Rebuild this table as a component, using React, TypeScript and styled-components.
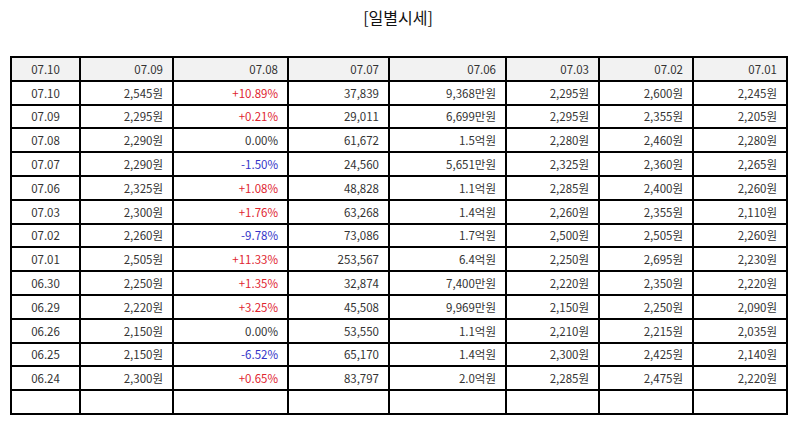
import styled, { createGlobalStyle } from 'styled-components'

const GlobalStyle = createGlobalStyle`
  html, body {
    margin: 0;
    padding: 0;
    background: #fff;
  }
  body {
    font-family: "Noto Sans CJK KR", "Noto Sans", sans-serif;
  }
`

type Row = {
  date: string
  close: string
  rate: string
  volume: string
  amount: string
  c1: string
  c2: string
  c3: string
}

const heads = ['07.10', '07.09', '07.08', '07.07', '07.06', '07.03', '07.02', '07.01']
const widths = [69, 93, 115, 101, 117, 93, 94, 94]

const rows: Row[] = [
  { date: '07.10', close: '2,545원', rate: '+10.89%', volume: '37,839', amount: '9,368만원', c1: '2,295원', c2: '2,600원', c3: '2,245원' },
  { date: '07.09', close: '2,295원', rate: '+0.21%', volume: '29,011', amount: '6,699만원', c1: '2,295원', c2: '2,355원', c3: '2,205원' },
  { date: '07.08', close: '2,290원', rate: '0.00%', volume: '61,672', amount: '1.5억원', c1: '2,280원', c2: '2,460원', c3: '2,280원' },
  { date: '07.07', close: '2,290원', rate: '-1.50%', volume: '24,560', amount: '5,651만원', c1: '2,325원', c2: '2,360원', c3: '2,265원' },
  { date: '07.06', close: '2,325원', rate: '+1.08%', volume: '48,828', amount: '1.1억원', c1: '2,285원', c2: '2,400원', c3: '2,260원' },
  { date: '07.03', close: '2,300원', rate: '+1.76%', volume: '63,268', amount: '1.4억원', c1: '2,260원', c2: '2,355원', c3: '2,110원' },
  { date: '07.02', close: '2,260원', rate: '-9.78%', volume: '73,086', amount: '1.7억원', c1: '2,500원', c2: '2,505원', c3: '2,260원' },
  { date: '07.01', close: '2,505원', rate: '+11.33%', volume: '253,567', amount: '6.4억원', c1: '2,250원', c2: '2,695원', c3: '2,230원' },
  { date: '06.30', close: '2,250원', rate: '+1.35%', volume: '32,874', amount: '7,400만원', c1: '2,220원', c2: '2,350원', c3: '2,220원' },
  { date: '06.29', close: '2,220원', rate: '+3.25%', volume: '45,508', amount: '9,969만원', c1: '2,150원', c2: '2,250원', c3: '2,090원' },
  { date: '06.26', close: '2,150원', rate: '0.00%', volume: '53,550', amount: '1.1억원', c1: '2,210원', c2: '2,215원', c3: '2,035원' },
  { date: '06.25', close: '2,150원', rate: '-6.52%', volume: '65,170', amount: '1.4억원', c1: '2,300원', c2: '2,425원', c3: '2,140원' },
  { date: '06.24', close: '2,300원', rate: '+0.65%', volume: '83,797', amount: '2.0억원', c1: '2,285원', c2: '2,475원', c3: '2,220원' },
]

const toneOf = (rate: string): 'up' | 'down' | 'flat' => {
  if (rate.startsWith('+')) return 'up'
  if (rate.startsWith('-')) return 'down'
  return 'flat'
}

const DailyPrice = () => {
  return (
    <Page>
      <GlobalStyle />
      <Title>[일별시세]</Title>
      <Table>
        <colgroup>
          {widths.map((w, i) => (
            <col key={i} style={{ width: w }} />
          ))}
        </colgroup>
        <thead>
          <tr>
            {heads.map((h, i) => (
              <HeadCell key={h} $center={i === 0}>
                {h}
              </HeadCell>
            ))}
          </tr>
        </thead>
        <tbody>
          {rows.map((r) => (
            <tr key={r.date}>
              <Cell $center>{r.date}</Cell>
              <Cell>{r.close}</Cell>
              <Cell $tone={toneOf(r.rate)}>{r.rate}</Cell>
              <Cell>{r.volume}</Cell>
              <Cell>{r.amount}</Cell>
              <Cell>{r.c1}</Cell>
              <Cell>{r.c2}</Cell>
              <Cell>{r.c3}</Cell>
            </tr>
          ))}
          <tr>
            {heads.map((h) => (
              <Cell key={h}>&nbsp;</Cell>
            ))}
          </tr>
        </tbody>
      </Table>
    </Page>
  )
}

const Page = styled.div`
  width: 794px;
  padding: 0 8px 0 10px;
  box-sizing: border-box;
`

const Title = styled.div`
  height: 56px;
  padding-top: 5px;
  box-sizing: border-box;
  text-align: center;
  font-size: 16px;
  line-height: 24px;
  color: #111;
`

const Table = styled.table`
  width: 776px;
  table-layout: fixed;
  border-collapse: separate;
  border-spacing: 0;
  border: 1px solid #000;
`

const HeadCell = styled.th<{ $center?: boolean }>`
  height: 21.8px;
  padding: ${(p) => (p.$center ? '0 4px' : '0 9px 0 4px')};
  border: 1px solid #000;
  background-color: #f2f2f2;
  font-weight: normal;
  font-size: 11.5px;
  color: #333;
  text-align: ${(p) => (p.$center ? 'center' : 'right')};
  white-space: nowrap;
`

const Cell = styled.td<{ $center?: boolean; $tone?: 'up' | 'down' | 'flat' }>`
  height: 21.8px;
  padding: ${(p) => (p.$center ? '0 4px' : '0 9px 0 4px')};
  border: 1px solid #000;
  font-size: 11.5px;
  color: ${(p) => (p.$tone === 'up' ? '#e02530' : p.$tone === 'down' ? '#3434c8' : '#333')};
  text-align: ${(p) => (p.$center ? 'center' : 'right')};
  white-space: nowrap;
`

export default DailyPrice
